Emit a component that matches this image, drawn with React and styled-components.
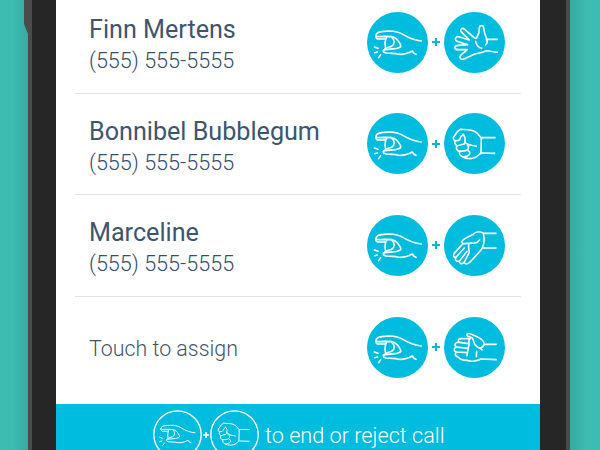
import React from "react";
import styled, { createGlobalStyle } from "styled-components";

const Global = createGlobalStyle`
  * { box-sizing: border-box; }
  body { margin: 0; overflow: hidden; font-family: Roboto, "Liberation Sans", sans-serif; }
`;

const Stage = styled.div`
  width: 600px;
  height: 450px;
  overflow: hidden;
  display: flex;
`;

const Backdrop = styled.div`
  flex: none;
  width: ${(p) => p.$width}px;
  background: linear-gradient(to ${(p) => p.$toward}, #3dbdb2 0, #3dbdb2 45%, #38a9a1 100%);
`;

const Edge = styled.div`
  flex: none;
  width: ${(p) => p.$width}px;
  background: #4b4b4b;
`;

const LeftEdge = styled(Edge)`
  margin-left: -4px;
  clip-path: polygon(0 0, 100% 0, 100% 100%, 4px 100%, 4px 34px, 0 24px);
`;

const Bezel = styled.div`
  flex: none;
  width: ${(p) => p.$width}px;
  background: #262626;
`;

const Screen = styled.main`
  flex: none;
  width: 484px;
  height: 450px;
  overflow: hidden;
  display: flex;
  flex-direction: column;
  background: #fff;
`;

const List = styled.div`
  flex: none;
  height: 403.5px;
  padding: 0 19px;
  display: flex;
  flex-direction: column;
  justify-content: flex-end;
`;

const Row = styled.div`
  flex: none;
  height: 101.5px;
  padding: 0 16px 0 14px;
  display: flex;
  align-items: center;
  justify-content: space-between;
  border-bottom: ${(p) => (p.$last ? "0" : "1.5px solid #e2e2e7")};
  ${(p) => p.$last && "height: 107px; padding-bottom: 6px;"}
`;

const Contact = styled.div`
  display: flex;
  flex-direction: column;
  padding-top: 6px;
`;

const Name = styled.div`
  font-size: 25.15px;
  line-height: 32px;
  color: #3d556f;
  white-space: nowrap;
`;

const Phone = styled.div`
  font-size: 21.6px;
  line-height: 30px;
  font-weight: 300;
  color: #34506c;
`;

const Hint = styled.div`
  padding-top: 3px;
  font-size: 21.4px;
  line-height: 28px;
  font-weight: 300;
  color: #3f556b;
`;

const Combo = styled.div`
  display: flex;
  align-items: center;
`;

const Icon = styled.svg`
  flex: none;
  display: block;
  fill: none;
  stroke: #fff;
  stroke-linecap: round;
  stroke-linejoin: round;
`;

const PlusBox = styled(Icon)`
  margin: 0 ${(p) => p.$gap}px;
  stroke: ${(p) => p.$color};
  stroke-linecap: butt;
`;

const Footer = styled.footer`
  flex: none;
  height: 62px;
  padding-left: 97px;
  display: flex;
  align-items: center;
  background: #00bcdf;
`;

const FooterText = styled.div`
  margin-left: 6px;
  padding-top: 3px;
  font-size: 21.65px;
  line-height: 30px;
  font-weight: 300;
  color: #fff;
  white-space: nowrap;
`;

/* Gestures are drawn on a 183-unit disc. */
const gestures = {
  snap: [
    "M163 87C140 85 124 77 109 68C94 58 80 57 66 57L43 59C36 60 29 63 27 69C25 73 30 74 35 74L56 73L75 74C87 76 94 85 100 97C105 105 96 108 85 110L53 113C48 113 48 117 50 120L57 123L87 125C102 130 119 126 136 117L141 124L147 127",
    "M27 71C25 77 29 81 36 81L57 81M59 75C54 86 53 98 56 108L52 113M75 76C84 84 84 96 74 103L58 108",
    "M22 105L33 109M23 122L31 120M35 137L41 128",
  ],
  open: [
    "M160 82H129C123 70 120 60 119 48C119 38 106 38 106 48L105 62L97 79C94 80 90 77 86 73L62 52C53 45 45 55 54 62L76 84L47 75C35 71 29 83 39 88L71 98L42 100C29 101 30 113 42 113L70 113L52 128C43 137 50 146 62 140L92 126C106 123 117 121 127 116L160 121",
    "M95 88C96 97 103 106 113 109M127 81C131 88 129 95 125 98",
  ],
  fist: [
    "M153 74L112 74C106 72 105 63 95 57C83 48 60 50 49 49L41 55L29 72C27 77 29 82 34 83C30 90 33 96 39 98C34 107 40 114 47 115C44 123 49 130 57 132C67 138 81 137 89 135C101 132 104 124 112 120L152 121",
    "M112 74L111 120M34 83C43 84 50 80 50 72L56 66M58 64L63 74C65 84 59 90 69 92C78 99 86 96 97 100M39 99L57 94C62 93 64 88 62 84M47 115L65 113C75 109 76 101 70 96M58 132L70 129C80 125 79 117 73 113",
  ],
  palm: [
    "M156 55H118C108 48 95 51 87 58C78 64 66 68 58 74C50 80 53 87 63 86L84 84C94 86 102 82 107 74",
    "M118 55C122 72 120 88 115 99H156M115 99C106 113 92 126 78 141C71 149 62 148 61 141C53 150 44 145 47 137C37 142 31 135 36 127C28 128 26 120 33 112L57 86M75 86C71 95 77 104 75 114L61 141M47 137L69 109M36 127L61 99",
  ],
  side: [
    "M157 82H121C120 69 109 64 101 60L82 52C72 46 64 53 72 58L84 62C91 69 86 80 98 88C105 96 110 91 114 99",
    "M121 82C118 88 114 92 108 94M98 103L97 119M79 65H55C42 64 40 70 46 76C34 75 29 83 37 90C28 94 29 103 37 105C30 113 36 118 42 120C48 127 58 130 68 130C83 136 104 130 110 126L157 128M76 66C73 76 77 83 73 92L69 116M46 76L74 80M37 90L72 94M37 105L70 107",
  ],
};

function Gesture({ kind }) {
  return (
    <Icon width="61" height="61" viewBox="0 0 183 183" strokeWidth="4.8">
      <circle cx="91.5" cy="91.5" r="91.5" fill="#00bcdf" stroke="none" />
      {gestures[kind].map((d) => <path key={d} d={d} />)}
    </Icon>
  );
}

function OutlinedGesture({ kind }) {
  return (
    <Icon width="49" height="49" viewBox="0 0 147 147" strokeWidth="4">
      <circle cx="73.5" cy="73.5" r="71" />
      <g transform="translate(3.5 3) scale(.75)">
        {gestures[kind].map((d) => <path key={d} d={d} />)}
      </g>
    </Icon>
  );
}

function Plus({ size, gap, color }) {
  return (
    <PlusBox width={size} height={size} viewBox="0 0 8 8" $gap={gap} $color={color} strokeWidth="2.2">
      <path d="M0 4H8M4 0V8" />
    </PlusBox>
  );
}

const contacts = [
  { name: "Finn Mertens", phone: "(555) 555-5555", gesture: "open" },
  { name: "Bonnibel Bubblegum", phone: "(555) 555-5555", gesture: "fist" },
  { name: "Marceline", phone: "(555) 555-5555", gesture: "palm" },
  { gesture: "side" },
];

export default function App() {
  return (
    <>
      <Global />
      <Stage>
        <Backdrop $width={28} $toward="right" />
        <LeftEdge $width={8} />
        <Bezel $width={24} />
        <Screen>
          <List>
            {contacts.map((c) => (
              <Row key={c.gesture} $last={!c.name}>
                {c.name ? (
                  <Contact>
                    <Name>{c.name}</Name>
                    <Phone>{c.phone}</Phone>
                  </Contact>
                ) : (
                  <Hint>Touch to assign</Hint>
                )}
                <Combo>
                  <Gesture kind="snap" />
                  <Plus size={8} gap={4} color="#12b5d3" />
                  <Gesture kind={c.gesture} />
                </Combo>
              </Row>
            ))}
          </List>
          <Footer>
            <OutlinedGesture kind="snap" />
            <Plus size={6} gap={1} color="#fff" />
            <OutlinedGesture kind="fist" />
            <FooterText>to end or reject call</FooterText>
          </Footer>
        </Screen>
        <Bezel $width={26} />
        <Edge $width={4} />
        <Backdrop $width={30} $toward="left" />
      </Stage>
    </>
  );
}
